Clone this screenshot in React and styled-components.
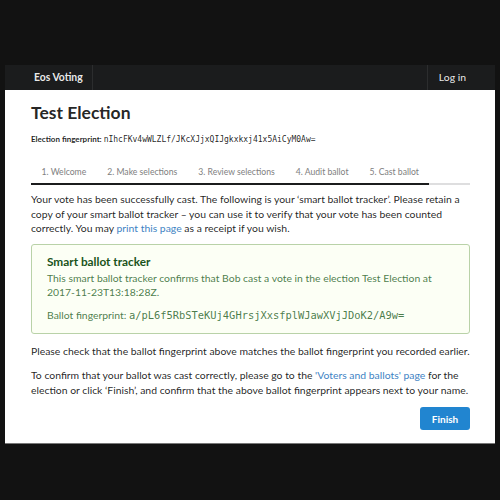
import React from "react";
import styled, { createGlobalStyle } from "styled-components";

const GlobalStyle = createGlobalStyle`
  html, body { margin: 0; padding: 0; background: #121212; }
  body { font-family: Lato, "Open Sans", sans-serif; font-size: 10.4px; line-height: 1.4285; color: rgba(0,0,0,0.87); }
  * { box-sizing: border-box; }
`;

const Frame = styled.div`
  padding: 65px 5px 58px 5px;
`;

const NavBar = styled.nav`
  display: flex;
  height: 25px;
  background: #1b1c1d;
`;

const NavItem = styled.div`
  display: flex;
  align-items: center;
  color: rgba(255,255,255,0.92);
  font-weight: ${p => (p.$bold ? 700 : 400)};
  font-size: 10.4px;
  padding: ${p => p.$pad};
  border-left: ${p => (p.$sepLeft ? "1px solid rgba(255,255,255,0.08)" : "none")};
  border-right: ${p => (p.$sepRight ? "1px solid rgba(255,255,255,0.08)" : "none")};
`;

const Spacer = styled.div`flex: 1;`;

const Panel = styled.main`
  background: #fff;
  padding: 11px 25px 13px 26px;
  box-shadow: 0 1px 0 #777;
`;

const Title = styled.h1`
  margin: 0;
  font-size: 17.5px;
  font-weight: 700;
  line-height: 24px;
  color: rgba(0,0,0,0.87);
`;

const Fingerprint = styled.div`
  margin-top: 7px;
  font-size: 8px;
  font-weight: 700;
  line-height: 14px;
`;

const Mono = styled.span`
  font-family: "DejaVu Sans Mono", "Liberation Mono", monospace;
  font-weight: 400;
  font-size: ${p => p.$size || "8px"};
`;

const Tabs = styled.div`
  display: flex;
  margin-top: 10px;
  border-bottom: 2px solid #dededf;
`;

const Tab = styled.div`
  padding: 8px 10.5px 4px;
  color: #808080;
  font-size: 8.65px;
  line-height: 14px;
  border-bottom: 2px solid #1b1c1d;
  margin-bottom: -2px;
`;

const Para = styled.p`
  margin: ${p => p.$m || "0 0 10px"};
  line-height: 14.6px;
`;

const Link = styled.a`
  color: #4183c4;
  text-decoration: none;
`;

const Message = styled.div`
  background: #fcfff5;
  border: 1px solid #b9d2a8;
  border-radius: 3px;
  padding: 9px 15px 10px;
  color: rgba(44,102,45,0.85);
  margin: 8px 0 10px;
`;

const MessageHeader = styled.div`
  color: #1a531b;
  font-weight: 700;
  font-size: 11.8px;
  line-height: 16px;
  margin-bottom: 1px;
`;

const MessageText = styled.p`
  margin: ${p => p.$m || "0"};
  line-height: 14.6px;
`;

const Actions = styled.div`
  display: flex;
  justify-content: flex-end;
  margin-top: 10px;
`;

const Button = styled.button`
  background: #2185d0;
  color: #fff;
  border: none;
  border-radius: 3px;
  font-family: Lato, sans-serif;
  font-weight: 700;
  font-size: 10px;
  height: 23px;
  width: 50px;
  padding: 0;
`;

const steps = ["1. Welcome", "2. Make selections", "3. Review selections", "4. Audit ballot", "5. Cast ballot"];

export default function App() {
  return (
    <Frame>
      <GlobalStyle />
      <NavBar>
        <NavItem $bold $sepRight $pad="0 9px 0 29px">Eos Voting</NavItem>
        <Spacer />
        <NavItem $sepLeft $pad="0 29px 0 11px">Log in</NavItem>
      </NavBar>
      <Panel>
        <Title>Test Election</Title>
        <Fingerprint>
          Election fingerprint: <Mono>nIhcFKv4wWLZLf/JKcXJjxQIJgkxkxj41x5AiCyM0Aw=</Mono>
        </Fingerprint>
        <Tabs>
          {steps.map(s => (
            <Tab key={s}>{s}</Tab>
          ))}
        </Tabs>
        <Para $m="7px 0 0">
          Your vote has been successfully cast. The following is your ‘smart ballot tracker’. Please retain a copy of your smart ballot tracker – you can use it to verify that your vote has been counted correctly. You may <Link href="#">print this page</Link> as a receipt if you wish.
        </Para>
        <Message>
          <MessageHeader>Smart ballot tracker</MessageHeader>
          <MessageText>
            This smart ballot tracker confirms that Bob cast a vote in the election Test Election at 2017-11-23T13:18:28Z.
          </MessageText>
          <MessageText $m="8px 0 0">
            Ballot fingerprint: <Mono $size="10.4px">a/pL6f5RbSTeKUj4GHrsjXxsfplWJawXVjJDoK2/A9w=</Mono>
          </MessageText>
        </Message>
        <Para>Please check that the ballot fingerprint above matches the ballot fingerprint you recorded earlier.</Para>
        <Para $m="0">
          To confirm that your ballot was cast correctly, please go to the <Link href="#">'Voters and ballots' page</Link> for the election or click ‘Finish’, and confirm that the above ballot fingerprint appears next to your name.
        </Para>
        <Actions>
          <Button>Finish</Button>
        </Actions>
      </Panel>
    </Frame>
  );
}
